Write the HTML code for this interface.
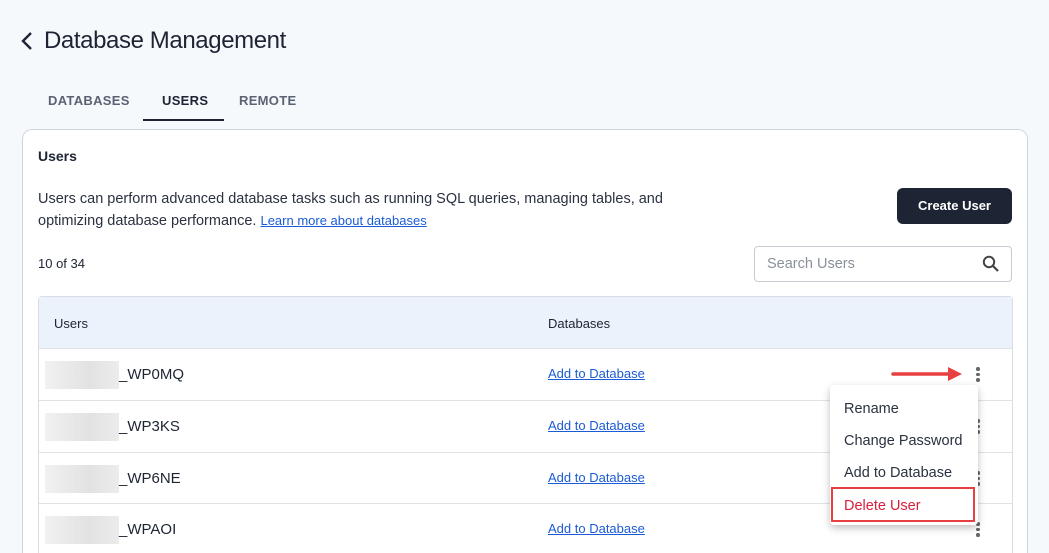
<!DOCTYPE html>
<html style="width:1049px;height:553px;overflow:hidden"><head><style>
body{margin:0;width:1049px;height:553px;overflow:hidden;background:#f6f9fc;font-family:"Liberation Sans",sans-serif;color:#1d2433;position:relative}
.abs{position:absolute}
.title{left:44px;top:27px;font-size:24px;letter-spacing:-0.4px}
.tab{top:93px;font-size:13px;font-weight:bold;letter-spacing:0.3px;color:#5b6372}
.card{left:22px;top:129px;width:1004px;height:440px;background:#fff;border:1px solid #cfd5dd;border-radius:10px;border-bottom:none}
.tbl{left:38px;top:296px;width:973px;height:270px;border:1px solid #d8dde4;border-radius:4px;background:#fff;border-bottom:none}
.row{position:absolute;left:0;width:973px;border-top:1px solid #dfe3e8;height:51px}
.name{position:absolute;left:6px;top:12px;width:74px;height:28px;background:linear-gradient(90deg,#f1f1f1,#e2e2e2 60%,#ececec)}
.nm{position:absolute;left:80px;top:17px;font-size:15px}
.lnk{position:absolute;left:509px;top:17px;font-size:13px;color:#1b5bd6;text-decoration:underline}
.dots{position:absolute;left:937px;top:18px;width:4px}
.dots i{display:block;width:3.5px;height:3.5px;border-radius:50%;background:#666;margin-bottom:2px}
.wrap{position:absolute;left:0;top:0;width:1049px;height:553px;overflow:hidden}
</style></head><body><div class="wrap">
<svg class="abs" style="left:20px;top:31px" width="14" height="20"><path d="M11 2 L3 10 L11 18" stroke="#1d2433" stroke-width="2.4" fill="none"/></svg>
<div class="abs title">Database Management</div>
<div class="abs tab" style="left:48px">DATABASES</div>
<div class="abs tab" style="left:162px;color:#1d2433">USERS</div>
<div class="abs tab" style="left:239px">REMOTE</div>
<div class="abs" style="left:143px;top:119px;width:81px;height:2px;background:#1d2433"></div>
<div class="abs card"></div>
<div class="abs" style="left:38px;top:148px;font-size:14px;font-weight:bold">Users</div>
<div class="abs" style="left:38px;top:188px;font-size:14.5px;line-height:22px;color:#2a3140;width:680px">Users can perform advanced database tasks such as running SQL queries, managing tables, and optimizing database performance. <span style="color:#1b5bd6;text-decoration:underline;font-size:13px">Learn more about databases</span></div>
<div class="abs" style="left:897px;top:188px;width:115px;height:36px;background:#1d2433;border-radius:6px;color:#fff;font-size:13px;font-weight:bold;text-align:center;line-height:36px">Create User</div>
<div class="abs" style="left:38px;top:256px;font-size:13px">10 of 34</div>
<div class="abs" style="left:754px;top:246px;width:256px;height:34px;border:1px solid #c7ccd3;border-radius:4px;background:#fff"><span style="position:absolute;left:12px;top:9px;font-size:14.5px;color:#8a909a">Search Users</span>
<svg style="position:absolute;left:227px;top:8px" width="18" height="18"><circle cx="7" cy="7" r="5.2" stroke="#444" stroke-width="2" fill="none"/><path d="M11 11 L16 16" stroke="#444" stroke-width="2.2"/></svg></div>
<div class="abs tbl">
<div style="position:absolute;left:0;top:0;width:973px;height:51px;background:#ebf2fc"></div>
<div style="position:absolute;left:15px;top:19px;font-size:13px">Users</div>
<div style="position:absolute;left:509px;top:19px;font-size:13px">Databases</div>
<div class="row" style="top:51px"><div class="name"></div><div class="nm">_WP0MQ</div><div class="lnk">Add to Database</div><div class="dots"><i></i><i></i><i></i></div></div>
<div class="row" style="top:103px"><div class="name"></div><div class="nm">_WP3KS</div><div class="lnk">Add to Database</div><div class="dots"><i></i><i></i><i></i></div></div>
<div class="row" style="top:155px"><div class="name"></div><div class="nm">_WP6NE</div><div class="lnk">Add to Database</div><div class="dots"><i></i><i></i><i></i></div></div>
<div class="row" style="top:206px;height:50px"><div class="name"></div><div class="nm">_WPAOI</div><div class="lnk">Add to Database</div><div class="dots"><i></i><i></i><i></i></div></div>
</div>
<svg class="abs" style="left:890px;top:366px" width="80" height="16"><path d="M3 8 L62 8" stroke="#e84040" stroke-width="3.5" stroke-linecap="round"/><path d="M58 1 L72 8 L58 15 Z" fill="#e84040"/></svg>
<div class="abs" style="left:830px;top:385px;width:148px;height:140px;background:#fff;border-radius:4px;box-shadow:0 3px 8px rgba(0,0,0,.25)">
<div style="position:absolute;left:14px;top:16px;font-size:14.5px;color:#2a3140">Rename</div>
<div style="position:absolute;left:14px;top:48px;font-size:14.5px;color:#2a3140">Change Password</div>
<div style="position:absolute;left:14px;top:80px;font-size:14.5px;color:#2a3140">Add to Database</div>
<div style="position:absolute;left:1px;top:102px;width:140px;height:31px;border:2.5px solid #e84040"></div>
<div style="position:absolute;left:14px;top:113px;font-size:14.5px;color:#d6203a">Delete User</div>
</div>
</div></body></html>
